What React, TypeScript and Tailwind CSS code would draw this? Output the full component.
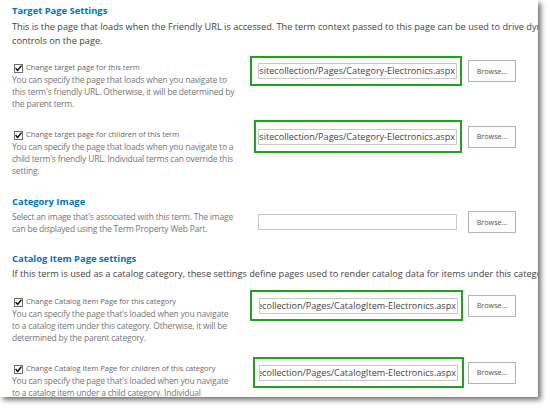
import React from "react";

type FieldRow = {
  label: string;
  lines: string[];
  value: string;
  labelPad: string;
  box: string;
  browseGap: string;
  rowGap: string;
};

const CATALOG_URL = "~sitecollection/Pages/CatalogItem-Electronics.aspx";
const CATEGORY_URL = "~sitecollection/Pages/Category-Electronics.aspx";

function Checkbox() {
  return (
    <span className="ml-[2px] mr-[3px] flex h-[9px] w-[9px] shrink-0 items-center justify-center border border-[#6d6d6d] bg-white">
      <svg width="7" height="7" viewBox="0 0 7 7" fill="none" stroke="#111" strokeWidth="1.5" strokeLinecap="round" strokeLinejoin="round">
        <path d="M1 3.6l1.7 1.8L6 1.2" />
      </svg>
    </span>
  );
}

function Browse() {
  return (
    <button
      type="button"
      className="flex h-[22px] w-[48px] shrink-0 items-center justify-center border border-[#b5b5b5] bg-[#fdfdfd] text-[7.2px] text-[#555]"
    >
      Browse...
    </button>
  );
}

function UrlInput({ value }: { value: string }) {
  return (
    <div className="flex h-[16px] w-[199px] items-center justify-end overflow-hidden border border-[#c8c8c8] bg-white px-[1px]">
      <span className="whitespace-nowrap text-[9.1px] leading-none text-[#444]">{value}</span>
    </div>
  );
}

function Heading({ children, className = "" }: { children: React.ReactNode; className?: string }) {
  return <h2 className={`text-[9.4px] font-bold leading-[14px] text-[#0072c6] ${className}`}>{children}</h2>;
}

// small grey help text under each checkbox
const helpText = "text-[8.5px] leading-[12px] tracking-[-0.2px] text-[#777]";

function Row({ row }: { row: FieldRow }) {
  return (
    <div className={`flex items-start ${row.rowGap}`}>
      <div className={`w-[238px] shrink-0 ${row.labelPad}`}>
        <div className="flex h-[12px] items-center">
          <Checkbox />
          <span className="whitespace-nowrap text-[7.5px] text-[#666]">{row.label}</span>
        </div>
        <p className={helpText}>
          {row.lines.map((l, i) => (
            <span key={i} className="block whitespace-nowrap">
              {l}
            </span>
          ))}
        </p>
      </div>
      <div className="flex items-center">
        <div className={`border-2 border-[#1fa21f] ${row.box}`}>
          <UrlInput value={row.value} />
        </div>
        <div className={row.browseGap}>
          <Browse />
        </div>
      </div>
    </div>
  );
}

const targetRows: FieldRow[] = [
  {
    label: "Change target page for this term",
    lines: [
      "You can specify the page that loads when you navigate to",
      "this term's friendly URL. Otherwise, it will be determined by",
      "the parent term.",
    ],
    value: CATEGORY_URL,
    labelPad: "pt-[6px]",
    box: "pl-[6px] pr-[3px] pt-[5px] pb-[5px]",
    browseGap: "ml-[6px]",
    rowGap: "mt-[8px]",
  },
  {
    label: "Change target page for children of this term",
    lines: [
      "You can specify the page that loads when you navigate to a",
      "child term's friendly URL. Individual terms can override this",
      "setting.",
    ],
    value: CATEGORY_URL,
    labelPad: "pt-[9px]",
    box: "ml-[4px] pl-[2px] pr-[3px] pt-[7px] pb-[6px]",
    browseGap: "ml-[6px]",
    rowGap: "mt-[10px]",
  },
];

const catalogRows: FieldRow[] = [
  {
    label: "Change Catalog Item Page for this category",
    lines: [
      "You can specify the page that's loaded when you navigate",
      "to a catalog item under this category. Otherwise, it will be",
      "determined by the parent category.",
    ],
    value: CATALOG_URL,
    labelPad: "pt-[6px]",
    box: "pl-[7px] pr-[3px] pt-[6px] pb-[5px]",
    browseGap: "ml-[5px]",
    rowGap: "mt-[9px]",
  },
  {
    label: "Change Catalog Item Page for children of this category",
    lines: [
      "You can specify the page that's loaded when you navigate",
      "to a catalog item under a child category. Individual",
      "terms can override this setting.",
    ],
    value: CATALOG_URL,
    labelPad: "pt-[6px]",
    box: "ml-[3px] pl-[4px] pr-[4px] pt-[6px] pb-[5px]",
    browseGap: "ml-[4px]",
    rowGap: "mt-[13px]",
  },
];

export default function App() {
  return (
    <div className="h-[409px] w-[550px] overflow-hidden bg-white font-['Open_Sans',sans-serif]">
      <div className="h-[397px] w-[538px] overflow-hidden bg-white pl-[12px] pt-[4px] shadow-[3px_3px_5px_rgba(0,0,0,0.55)]">
        {/* Target page */}
        <Heading>Target Page Settings</Heading>
        <p className="mt-[2px] text-[9.2px] leading-[14px] text-[#444]">
          <span className="block whitespace-nowrap">
            This is the page that loads when the Friendly URL is accessed. The term context passed to this page can be used to drive dynamic
          </span>
          <span className="block whitespace-nowrap">controls on the page.</span>
        </p>
        {targetRows.map((r) => (
          <Row key={r.label} row={r} />
        ))}

        {/* Category image */}
        <div className="mt-[18px] flex items-start">
          <div className="w-[238px] shrink-0">
            <Heading>Category Image</Heading>
            <p className={`mt-[2px] ${helpText}`}>
              <span className="block whitespace-nowrap">Select an image that's associated with this term. The image</span>
              <span className="block whitespace-nowrap">can be displayed using the Term Property Web Part.</span>
            </p>
          </div>
          <div className="flex items-center pt-[16px]">
            <div className="ml-[8px]">
              <div className="h-[16px] w-[199px] border border-[#c8c8c8] bg-white" />
            </div>
            <div className="ml-[11px]">
              <Browse />
            </div>
          </div>
        </div>

        {/* Catalog item page */}
        <Heading className="mt-[17px]">Catalog Item Page settings</Heading>
        <p className="mt-[1px] text-[9.2px] leading-[14px] text-[#444]">
          <span className="block whitespace-nowrap">
            If this term is used as a catalog category, these settings define pages used to render catalog data for items under this category.
          </span>
        </p>
        {catalogRows.map((r) => (
          <Row key={r.label} row={r} />
        ))}
      </div>
    </div>
  );
}
